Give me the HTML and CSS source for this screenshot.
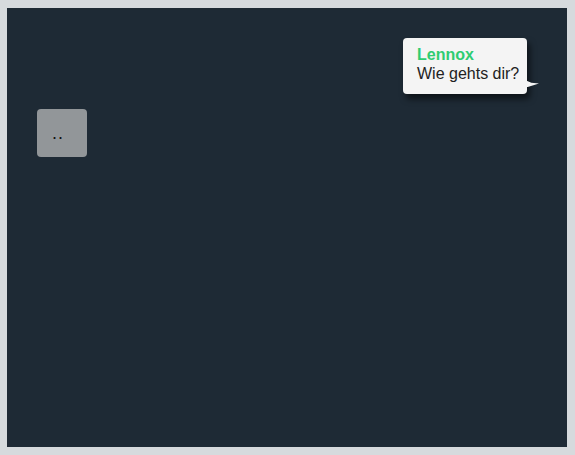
FILE: index.html
```html
<!DOCTYPE html>
<html>
<head>
<meta charset="utf-8">
<link rel="stylesheet" href="styles.css">
</head>
<body>
<div class="stage">
  <div class="tile">..</div>
  <div class="bubble">
    <div class="name">Lennox</div>
    <div class="msg">Wie gehts dir?</div>
  </div>
</div>
</body>
</html>
```
FILE: styles.css
```css
html, body {
  margin: 0;
  padding: 0;
}
body {
  background: #d6dadd;
  width: 575px;
  height: 455px;
  padding: 8px 8px 8px 7px;
  box-sizing: border-box;
  font-family: "Liberation Sans", Arial, sans-serif;
}
.stage {
  position: relative;
  width: 560px;
  height: 439px;
  background: #1e2a35;
}
.tile {
  position: absolute;
  left: 30px;
  top: 101px;
  width: 50px;
  height: 48px;
  box-sizing: border-box;
  padding-left: 15px;
  background: #929699;
  border-radius: 4px;
  color: #111;
  font-size: 18px;
  line-height: 48px;
  letter-spacing: 1px;
}
.bubble {
  position: absolute;
  left: 396px;
  top: 30px;
  width: 124px;
  height: 56px;
  box-sizing: border-box;
  padding: 7px 0 0 14px;
  background: #f4f4f4;
  border-radius: 4px;
  box-shadow: 3px 5px 6px rgba(0,0,0,0.55);
}
.bubble::after {
  content: "";
  position: absolute;
  right: -12px;
  top: 42px;
  width: 14px;
  height: 7px;
  background: #f4f4f4;
  clip-path: polygon(0 0, 45% 40%, 100% 50%, 60% 75%, 20% 100%, 0 100%);
}
.name {
  color: #2ecc71;
  font-weight: bold;
  font-size: 16px;
  line-height: 19px;
}
.msg {
  color: #222;
  font-size: 16px;
  line-height: 20px;
}
```
